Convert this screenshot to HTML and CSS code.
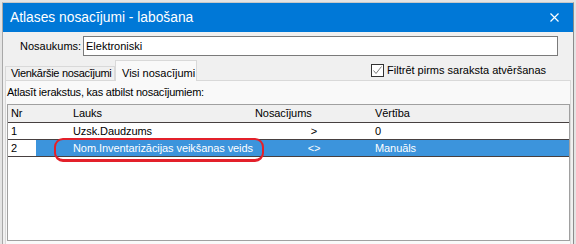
FILE: index.html
```html
<!DOCTYPE html>
<html lang="lv">
<head>
    <meta charset="UTF-8">
    <title>Atlases nosacījumi - labošana</title>
    <link rel="stylesheet" href="styles.css">
</head>
<body>
    <div class="window">
        <div class="titlebar">
            <span class="title">Atlases nosacījumi - labošana</span>
            <svg class="close" width="9" height="9" viewBox="0 0 9 9">
                <path d="M0.5 0.5 L8.5 8.5 M8.5 0.5 L0.5 8.5" stroke="#fff" stroke-width="1.2" fill="none"/>
            </svg>
        </div>
        <div class="name-row">
            <label class="name-label">Nosaukums:</label>
            <div class="text-input">Elektroniski</div>
        </div>
        <div class="tab-row">
            <div class="tab tab-first">Vienkāršie nosacījumi</div>
            <div class="tab tab-active">Visi nosacījumi</div>
            <label class="check">
                <span class="check-box">
                    <svg width="11" height="11" viewBox="0 0 11 11">
                        <path d="M1.5 5.5 L4 8.5 L9.5 1.5" stroke="#7c7c7c" stroke-width="1" fill="none"/>
                    </svg>
                </span>
                Filtrēt pirms saraksta atvēršanas
            </label>
        </div>
        <div class="panel">
            <div class="hint">Atlasīt ierakstus, kas atbilst nosacījumiem:</div>
            <div class="list">
                <div class="row head">
                    <div class="c-nr">Nr</div>
                    <div class="c-field">Lauks</div>
                    <div class="c-cond">Nosacījums</div>
                    <div class="c-val">Vērtība</div>
                </div>
                <div class="row">
                    <div class="c-nr">1</div>
                    <div class="c-field">Uzsk.Daudzums</div>
                    <div class="c-cond">&gt;</div>
                    <div class="c-val">0</div>
                </div>
                <div class="row selected">
                    <div class="c-nr">2</div>
                    <div class="c-field">Nom.Inventarizācijas veikšanas veids</div>
                    <div class="c-cond">&lt;&gt;</div>
                    <div class="c-val">Manuāls</div>
                </div>
                <!-- red marker drawn over the selected row -->
                <div class="marker"></div>
            </div>
        </div>
    </div>
</body>
</html>
```

FILE: styles.css
```css
body {
    margin: 0;
    background: #e4e4e4;
    font-family: "Liberation Sans", Arial, sans-serif;
    font-size: 11px;
    color: #000;
    overflow: hidden;
}
.window {
    margin: 2px 0 0 2px;
    width: 570px;
    height: 241px;
    overflow: hidden;
    background: #f0f0f0;
    border-top: 1px solid #c8c8c8;
    border-left: 1px solid #a8a8a8;
    border-right: 1px solid #8c8c8c;
}
.titlebar {
    height: 29px;
    background: #0078d7;
    color: #fff;
    display: flex;
    align-items: center;
    padding: 0 14px 0 7px;
    font-size: 13.8px;
}
.title {
    flex: 1;
}
.close {
    display: block;
}
.name-row {
    display: flex;
    align-items: center;
    margin-top: 4px;
    padding: 0 15px 0 17px;
}
.name-label {
    width: 63px;
}
.text-input {
    flex: 1;
    height: 20px;
    box-sizing: border-box;
    border: 1px solid #7a7a7a;
    background: #fff;
    padding-left: 2px;
    line-height: 18px;
}
.tab-row {
    display: flex;
    align-items: flex-end;
    height: 20px;
    margin-top: 4px;
    padding-left: 2px;
}
.tab {
    box-sizing: border-box;
    border: 1px solid #d9d9d9;
    border-bottom: none;
    line-height: 12px;
    white-space: nowrap;
}
.tab-first {
    width: 110px;
    height: 14px;
    padding-left: 5px;
    letter-spacing: -0.3px;
    background: #f0f0f0;
}
.tab-active {
    position: relative;
    z-index: 1;
    width: 82px;
    height: 21px;
    margin-bottom: -1px;
    padding: 6px 0 0 6px;
    background: #f9f9f9;
}
.check {
    display: flex;
    align-items: center;
    align-self: center;
    margin-left: auto;
    margin-right: 27px;
    gap: 3px;
}
.check-box {
    width: 13px;
    height: 13px;
    box-sizing: border-box;
    border: 1px solid #333;
    background: #fff;
}
.check-box svg {
    display: block;
}
.panel {
    margin: 0 2px 0 2px;
    border: 1px solid #d9d9d9;
    border-bottom: none;
    background: #f9f9f9;
    padding: 2px 0 0 1px;
    height: 200px;
}
.hint {
    line-height: 18px;
    margin-bottom: 3px;
    letter-spacing: -0.22px;
}
.list {
    position: relative;
    height: 137px;
    box-sizing: border-box;
    border: 1px solid #a0a0a0;
    background: #fff;
}
.row {
    display: grid;
    grid-template-columns: 28px 219px 118px 1fr;
    height: 17px;
    box-sizing: border-box;
    border-bottom: 1px solid #474040;
    line-height: 16px;
    white-space: nowrap;
    letter-spacing: -0.08px;
}
.row.head {
    background: #f0f0f0;
    height: 18px;
    line-height: 17px;
}
.c-nr {
    padding-left: 3px;
}
.c-field {
    padding-left: 37px;
}
.c-cond {
    text-align: center;
}
.head .c-cond {
    text-align: left;
}
.c-val {
    padding-left: 2px;
}
.selected .c-field,
.selected .c-cond,
.selected .c-val {
    background: #3c94dc;
    color: #fff;
}
.marker {
    position: absolute;
    left: 46px;
    top: 33px;
    width: 210px;
    height: 24px;
    box-sizing: border-box;
    border: 2px solid #e3202a;
    border-bottom-width: 3px;
    border-radius: 9px;
}
```
